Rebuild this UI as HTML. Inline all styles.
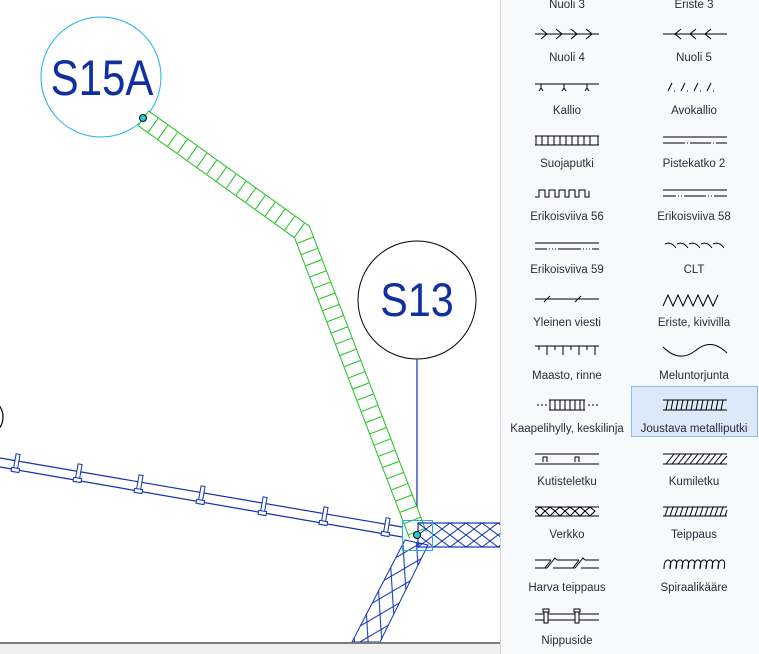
<!DOCTYPE html>
<html><head><meta charset="utf-8"><style>
html,body{margin:0;padding:0;width:759px;height:654px;overflow:hidden;background:#fff;font-family:"Liberation Sans",sans-serif}
#panel{position:absolute;left:500px;top:0;width:259px;height:654px;background:#f8f9fb;border-left:1px solid #d4d4d4;box-sizing:border-box}
.lbl{position:absolute;width:128px;text-align:center;font-size:11.5px;color:#2a2a3a;line-height:14px}
#bottom{position:absolute;left:0;top:642px;width:500px;height:12px;background:#efefef;border-top:2px solid #7a7a7a;box-sizing:border-box}
</style></head><body>
<svg width="500" height="642" style="position:absolute;left:0;top:0" xmlns="http://www.w3.org/2000/svg">
<defs>
<pattern id="xh" width="16" height="12" patternUnits="userSpaceOnUse" x="418" y="523"><path d="M0 0L16 12M16 0L0 12" stroke="#1030b0" stroke-width="1"/></pattern>
<pattern id="xh2" width="16" height="26" patternUnits="userSpaceOnUse" patternTransform="rotate(28)"><path d="M0 0L16 26M16 0L0 26" stroke="#1030b0" stroke-width="1"/></pattern>
</defs>
<circle cx="101" cy="77" r="60" fill="none" stroke="#1ab0f0" stroke-width="1"/>
<text x="0" y="0" text-anchor="middle" font-size="50" fill="#1030a0" font-family="Liberation Sans" transform="translate(102,95) scale(0.84,1)">S15A</text>
<circle cx="417" cy="300" r="59" fill="none" stroke="#000" stroke-width="1"/>
<text x="0" y="0" text-anchor="middle" font-size="47" fill="#1030a0" font-family="Liberation Sans" transform="translate(417,316) scale(0.88,1)">S13</text>
<line x1="417" y1="359" x2="417" y2="535" stroke="#1030a0" stroke-width="1.2"/>
<circle cx="-16" cy="417" r="19" fill="none" stroke="#000" stroke-width="1.2"/>
<!-- green conduit -->
<g fill="none">
<polyline points="143,118 302,232 418,535" stroke="#20c020" stroke-width="19"/>
<polyline points="143,118 302,232 418,535" stroke="#fff" stroke-width="17"/>
<polyline points="143,118 302,232 418,535" stroke="#20c020" stroke-width="17" stroke-dasharray="1 11"/>
</g>
<!-- blue cable -->
<line x1="0" y1="458" x2="402" y2="527" stroke="#1030b0" stroke-width="1.2"/>
<line x1="0" y1="467" x2="402" y2="537" stroke="#1030b0" stroke-width="1.2"/>
<g fill="#fff" stroke="#1030b0" stroke-width="1">
<g transform="translate(16,466) rotate(10)"><rect x="-2" y="-12" width="4" height="18"/><rect x="-4" y="2" width="8" height="4"/></g>
<g transform="translate(78,476) rotate(10)"><rect x="-2" y="-12" width="4" height="18"/><rect x="-4" y="2" width="8" height="4"/></g>
<g transform="translate(139,487) rotate(10)"><rect x="-2" y="-12" width="4" height="18"/><rect x="-4" y="2" width="8" height="4"/></g>
<g transform="translate(201,498) rotate(10)"><rect x="-2" y="-12" width="4" height="18"/><rect x="-4" y="2" width="8" height="4"/></g>
<g transform="translate(263,509) rotate(10)"><rect x="-2" y="-12" width="4" height="18"/><rect x="-4" y="2" width="8" height="4"/></g>
<g transform="translate(324,519) rotate(10)"><rect x="-2" y="-12" width="4" height="18"/><rect x="-4" y="2" width="8" height="4"/></g>
<g transform="translate(386,530) rotate(10)"><rect x="-2" y="-12" width="4" height="18"/><rect x="-4" y="2" width="8" height="4"/></g>
</g>
<!-- horizontal crosshatch -->
<rect x="418" y="523" width="90" height="24" fill="url(#xh)" stroke="#1030b0" stroke-width="1.2"/>
<!-- diagonal band -->
<polygon points="405,540 428,545 380,642 352,642" fill="url(#xh2)" stroke="#1030b0" stroke-width="1"/>
<rect x="402.5" y="520.5" width="30" height="30" fill="none" stroke="#1ab0f0" stroke-width="1"/>
<circle cx="417" cy="535" r="3.5" fill="#20d0d0" stroke="#000" stroke-width="1"/>
<circle cx="143" cy="118" r="3.5" fill="#20d0d0" stroke="#000" stroke-width="1"/>
</svg>
<div id="bottom"></div>
<div id="panel">
<div class="lbl" style="left:2px;top:-2px">Nuoli 3</div><div class="lbl" style="left:129px;top:-2px">Eriste 3</div>
<div class="lbl" style="left:2px;top:51px">Nuoli 4</div><div class="lbl" style="left:129px;top:51px">Nuoli 5</div>
<div class="lbl" style="left:2px;top:104px">Kallio</div><div class="lbl" style="left:129px;top:104px">Avokallio</div>
<div class="lbl" style="left:2px;top:157px">Suojaputki</div><div class="lbl" style="left:129px;top:157px">Pistekatko 2</div>
<div class="lbl" style="left:2px;top:210px">Erikoisviiva 56</div><div class="lbl" style="left:129px;top:210px">Erikoisviiva 58</div>
<div class="lbl" style="left:2px;top:263px">Erikoisviiva 59</div><div class="lbl" style="left:129px;top:263px">CLT</div>
<div class="lbl" style="left:2px;top:316px">Yleinen viesti</div><div class="lbl" style="left:129px;top:316px">Eriste, kivivilla</div>
<div class="lbl" style="left:2px;top:369px">Maasto, rinne</div><div class="lbl" style="left:129px;top:369px">Meluntorjunta</div>
<div style="position:absolute;left:130px;top:386px;width:127px;height:51px;background:#dce9fa;border:1px solid #90bdf0;box-sizing:border-box"></div>
<div class="lbl" style="left:2px;top:422px">Kaapelihylly, keskilinja</div><div class="lbl" style="left:129px;top:422px">Joustava metalliputki</div>
<div class="lbl" style="left:2px;top:475px">Kutisteletku</div><div class="lbl" style="left:129px;top:475px">Kumiletku</div>
<div class="lbl" style="left:2px;top:528px">Verkko</div><div class="lbl" style="left:129px;top:528px">Teippaus</div>
<div class="lbl" style="left:2px;top:581px">Harva teippaus</div><div class="lbl" style="left:129px;top:581px">Spiraalikääre</div>
<div class="lbl" style="left:2px;top:634px">Nippuside</div>
<svg width="259" height="654" style="position:absolute;left:0;top:0" fill="none" stroke="#000" stroke-width="1">
<path d="M34 34H98M40 29l6 5-6 5M55 29l6 5-6 5M70 29l6 5-6 5M85 29l6 5-6 5"/>
<path d="M162 34H226M180 29l-6 5 6 5M195 29l-6 5 6 5M210 29l-6 5 6 5"/>
<path d="M34 84H98M40 84v4l-2 3M40 88l2 3M63 84v4l-2 3M63 88l2 3M86 84v4l-2 3M86 88l2 3"/>
<path d="M167 91l4-8M180 91l4-8M193 91l4-8M206 91l4-8M173 91h1M186 91h1M199 91h1M212 91h1"/>
<path d="M34 136H98M34 145H98M35 136v9M97 136v9M41 136v9M47 136v9M53 136v9M59 136v9M65 136v9M71 136v9M77 136v9M83 136v9M89 136v9"/>
<path d="M162 137H226M162 143H184M186 143h1M189 143H210M212 143h1M215 143H226"/>
<path d="M34 197h4v-7h6v7h4v-7h6v7h4v-7h6v7h4v-7h6v7h4v-7h6v7h4v-6"/>
<path d="M162 190H226M162 196H175M177 196h1M180 196h1M183 196H205M207 196h1M210 196h1M213 196H226"/>
<path d="M34 243H98M34 249H46M48 249h1M51 249h1M54 249h1M57 249H80M82 249h1M85 249h1M88 249h1M91 249H98"/>
<path d="M164 244q6-3 11 4M176 244q6-3 11 4M188 244q6-3 11 4M200 244q6-3 11 4M212 244q6-3 11 4"/>
<path d="M34 299H98M43 302l6-6M74 302l6-6"/>
<path d="M162 306l5-11 5 11 5-11 5 11 5-11 5 11 5-11 5 11 5-11 5 11 5-11"/>
<path d="M34 346H98M38 346v4M46 346v9M54 346v4M62 346v9M70 346v4M78 346v9M86 346v4M94 346v9"/>
<path d="M162 347q16 16 32 4q16-14 32 2"/>
<path d="M36 405h2M40 405h2M44 405h2M87 405h2M91 405h2M95 405h2M48 400h36M48 410h36M49 400v10M54 400v10M59 400v10M64 400v10M69 400v10M74 400v10M79 400v10M83 400v10"/>
<path d="M162 400h64M162 410h64M165 410l2-10M170 410l2-10M175 410l2-10M180 410l2-10M185 410l2-10M190 410l2-10M195 410l2-10M200 410l2-10M205 410l2-10M210 410l2-10M215 410l2-10M220 410l2-10"/>
<path d="M34 454H98M34 464H98M42 462v-5h4v5M74 462v-5h4v5"/>
<path d="M162 454H226M162 464H226M165 464l8-10M171 464l8-10M177 464l8-10M183 464l8-10M189 464l8-10M195 464l8-10M201 464l8-10M207 464l8-10M213 464l8-10M219 464l7-8"/>
<path d="M34 507H98M34 516H98M34 511l5-4 5 4-5 5-5-5M44 511l5-4 5 4-5 5-5-5M54 511l5-4 5 4-5 5-5-5M64 511l5-4 5 4-5 5-5-5M74 511l5-4 5 4-5 5-5-5M84 511l5-4 5 4-5 5-5-5"/>
<path d="M162 507H226M162 516H226M164 516l3-9M169 516l3-9M174 516l3-9M179 516l3-9M184 516l3-9M189 516l3-9M194 516l3-9M199 516l3-9M204 516l3-9M209 516l3-9M214 516l3-9M219 516l3-9M224 516l2-6"/>
<path d="M34 560H50M34 568H46M56 560H78M52 568H74M84 560H98M80 568H98M46 568l8-10 2 2M50 560l-6 8M74 568l8-10 2 2M78 560l-6 8"/>
<path d="M163 569q0-9 4-9t2 9q0-9 4-9t2 9q0-9 4-9t2 9q0-9 4-9t2 9q0-9 4-9t2 9q0-9 4-9t2 9q0-9 4-9t2 9q0-9 4-9t2 9q0-9 4-9t2 9q0-9 4-9t2 9"/>
<path d="M34 614H98M34 620H98"/>
<rect x="43" y="612" width="4" height="11" fill="#f8f9fb"/><rect x="42" y="609" width="6" height="3"/>
<rect x="74" y="612" width="4" height="11" fill="#f8f9fb"/><rect x="73" y="609" width="6" height="3"/>
</svg>
</div>
</body></html>
